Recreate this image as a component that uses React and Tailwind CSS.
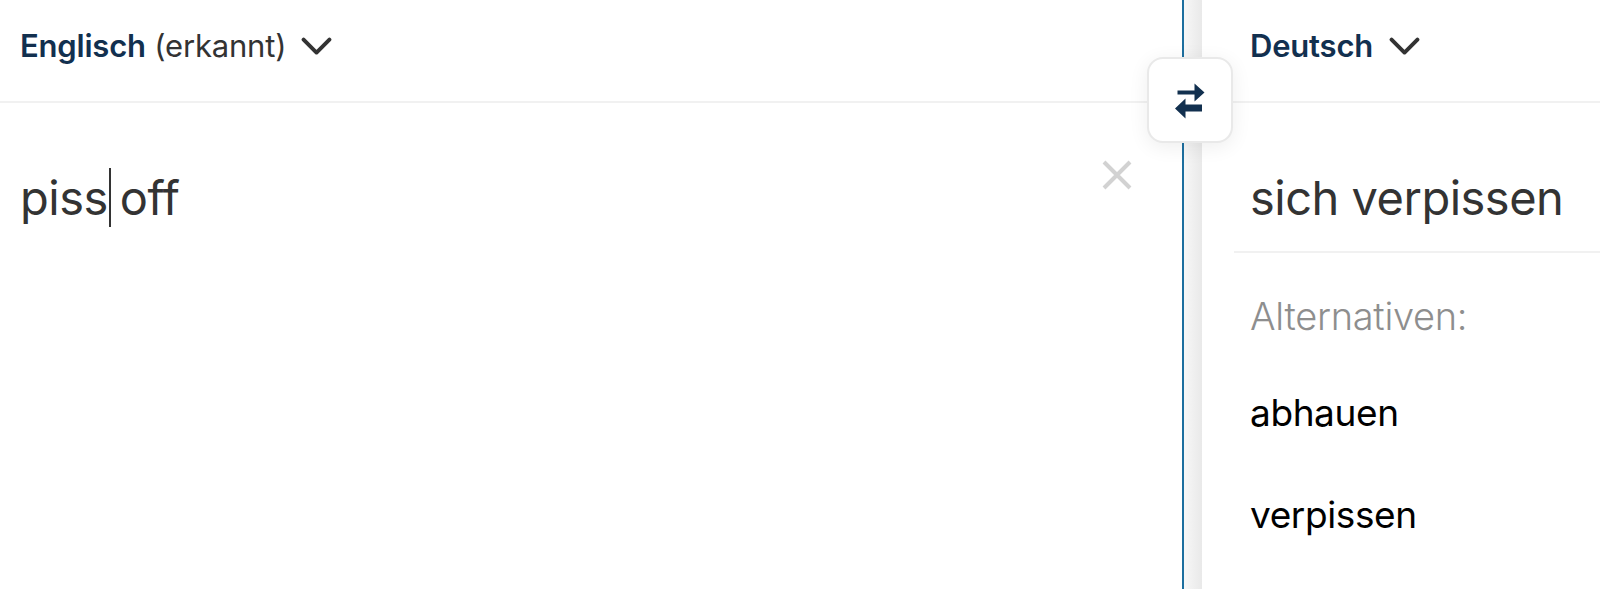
import React from 'react';

// Swap arrows, drawn to match the reference
const SwapIcon = () => (
  <svg width="30" height="38" viewBox="0 0 30 38" fill="#12304f">
    <path d="M2.5 8.5h17V1.500L29.5 10.500 19.500 19.500V12.500h-17z" />
    <path d="M27 22.500H10.500V16.500L0 26.500 10.500 36.500V29.500H27z" />
  </svg>
);

const Chevron = ({ size = 31 }) => (
  <svg width={size} height={size * 0.667} viewBox="0 0 30 20" fill="none" stroke="#333" strokeWidth="3.800" strokeLinecap="round" strokeLinejoin="round">
    <path d="M2.500 3.500 15 16 27.500 3.500" />
  </svg>
);

const ClearIcon = () => (
  <svg width="30" height="30" viewBox="0 0 30 30" fill="none" stroke="#d2d2d2" strokeWidth="4">
    <path d="M2 2 28 28M28 2 2 28" />
  </svg>
);

export default function App() {
  return (
    <div className="relative flex h-[589px] w-[1600px] overflow-hidden bg-white font-['Inter',sans-serif] [font-variant-ligatures:none]">
      {/* Source language pane */}
      <div className="flex h-full w-[1182px] shrink-0 flex-col">
        <div className="flex h-[103px] shrink-0 items-center gap-[15px] border-b-2 border-[#f1f1f1] pb-2 pl-5">
          <div className="text-[31px] tracking-[-0.2px] text-[#333]">
            <span className="font-semibold text-[#12304f]">Englisch</span> (erkannt)
          </div>
          <Chevron />
        </div>
        <div className="flex items-start justify-between pt-[65px] pr-[50px] pl-5">
          <div className="flex items-center text-[47px] leading-[56px] tracking-[-0.5px] text-[#333]">
            <span>piss</span>
            <span className="mr-[9px] ml-px h-[59px] w-0.5 bg-[#333]"></span>
            <span>off</span>
          </div>
          <div className="-mt-2">
            <ClearIcon />
          </div>
        </div>
      </div>

      {/* Divider between panes */}
      <div className="h-full w-0.5 shrink-0 bg-[#1d6f9f]"></div>
      <div className="h-full w-[18px] shrink-0 bg-gradient-to-r from-[#f7f7f7] to-[#e9e9e9]"></div>

      {/* Target language pane */}
      <div className="flex h-full flex-1 flex-col">
        <div className="flex h-[103px] shrink-0 items-center gap-4 border-b-2 border-[#f1f1f1] pb-2 pl-12">
          <span className="text-[31px] font-semibold tracking-[-0.2px] text-[#12304f]">Deutsch</span>
          <Chevron />
        </div>
        <div className="pl-8">
          <div className="flex h-[150px] items-center border-b-2 border-[#f1f1f1] pt-[43px] pl-4 text-[47px] tracking-[-0.5px] text-[#333]">
            sich verpissen
          </div>
          <div className="pl-4">
            <div className="pt-[41px] text-[38px] leading-[44px] font-light tracking-[-0.3px] text-[#8e8e8e]">Alternativen:</div>
            <div className="pt-[53px] text-[37px] leading-[44px] tracking-[-0.4px] text-black">abhauen</div>
            <div className="pt-[58px] text-[37px] leading-[44px] tracking-[-0.4px] text-black">verpissen</div>
          </div>
        </div>
      </div>

      {/* Swap button sits over the divider */}
      <button className="absolute top-[57px] left-[1147px] flex h-[86px] w-[86px] items-center justify-center rounded-[16px] border-2 border-[#e9e9e9] bg-white pt-0.5 shadow-[0_4px_20px_rgba(0,0,0,0.07)]">
        <SwapIcon />
      </button>
    </div>
  );
}
